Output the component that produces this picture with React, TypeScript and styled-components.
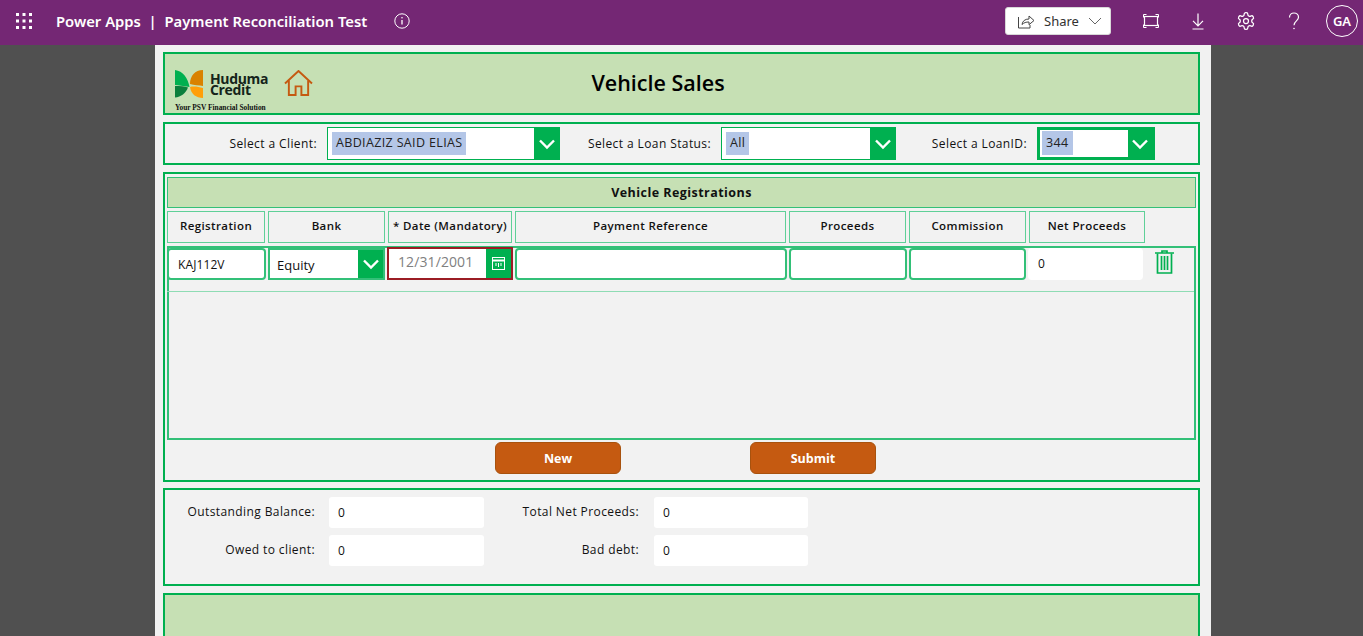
import { createGlobalStyle, styled } from "styled-components";
import { ReactNode } from "react";

const GREEN = "#00b050";
const LEAF = "#c6e0b4";
const SOFT = "#33c078";
const BODY = '"Open Sans", "Noto Sans", "Liberation Sans", sans-serif';

const Global = createGlobalStyle`
  html, body { margin: 0; padding: 0; height: 636px; overflow: hidden; background: #505050; }
  * { box-sizing: border-box; }
  body { font-family: ${BODY}; color: #111; }
`;

const Shell = styled.div`
  width: 1363px;
  height: 636px;
  overflow: hidden;
  display: flex;
  flex-direction: column;
`;

const TopBar = styled.header`
  height: 45px;
  flex: none;
  background: #742774;
  color: #fff;
  display: flex;
  align-items: center;
  padding: 0 0 3px 16px;
`;

const Waffle = styled.svg`
  width: 16px;
  height: 16px;
  margin-right: 24px;
`;

const AppName = styled.div`
  font-family: "Noto Sans", "Open Sans", sans-serif;
  font-size: 14.8px;
  font-weight: 600;
  white-space: pre;
`;

const InfoIcon = styled.svg`
  width: 16px;
  height: 16px;
  margin-left: 27px;
`;

const BarRight = styled.div`
  margin-left: auto;
  display: flex;
  align-items: center;
`;

const ShareButton = styled.button`
  width: 106px;
  height: 28px;
  margin-right: 30px;
  padding: 0 0 0 12px;
  border: 1px solid #d8d8d8;
  border-radius: 3px;
  background: #fff;
  color: #323130;
  font-family: "Noto Sans", "Open Sans", sans-serif;
  font-size: 13px;
  display: flex;
  align-items: center;
  gap: 9px;
`;

const BarIcon = styled.svg<{ $gap: number }>`
  width: 20px;
  height: 20px;
  margin-right: ${(p) => p.$gap}px;
`;

const Avatar = styled.div`
  width: 32px;
  height: 32px;
  margin-right: 5px;
  border: 1px solid #fff;
  border-radius: 50%;
  font-family: "Noto Sans", "Open Sans", sans-serif;
  font-size: 13px;
  font-weight: 600;
  display: flex;
  align-items: center;
  justify-content: center;
`;

const Canvas = styled.main`
  width: 1056px;
  margin-left: 155px;
  flex: 1;
  min-height: 0;
  padding: 7px 11px 0 8px;
  background: #f1f1f1;
  display: flex;
  flex-direction: column;
  gap: 7px;
`;

const Panel = styled.section<{ $h: number; $fill?: boolean }>`
  height: ${(p) => p.$h}px;
  flex: none;
  border: 2px solid ${GREEN};
  background: ${(p) => (p.$fill ? LEAF : "#f2f2f2")};
`;

const HeaderGrid = styled(Panel)`
  display: grid;
  grid-template-columns: 138px 690px;
  padding-left: 10px;
`;

const LogoBlock = styled.div`
  display: grid;
  grid-template-columns: 109px 29px;
  align-items: center;
`;

const LogoLeft = styled.div`
  padding-top: 15px;
`;

const LogoRow = styled.div`
  display: flex;
  align-items: center;
  gap: 6px;
`;

const LogoWords = styled.div`
  font-family: "Open Sans", sans-serif;
  font-size: 14px;
  font-weight: 700;
  line-height: 11.5px;
  letter-spacing: -0.35px;
  color: #14241a;
`;

const Tagline = styled.div`
  margin-top: 6px;
  font-family: "Liberation Serif", serif;
  font-size: 7.4px;
  font-weight: 700;
  line-height: 8px;
  white-space: nowrap;
`;

const Title = styled.h1`
  margin: 0;
  font-size: 21.5px;
  font-weight: 600;
  line-height: 57px;
  text-align: center;
  color: #000;
`;

const FilterRow = styled(Panel)`
  display: flex;
  align-items: center;
`;

const Label = styled.label<{ $w: number }>`
  width: ${(p) => p.$w}px;
  flex: none;
  padding-right: 10px;
  text-align: right;
  font-size: 12px;
  letter-spacing: 0.4px;
  white-space: nowrap;
`;

const Combo = styled.div<{ $w: number; $thick?: boolean }>`
  width: ${(p) => p.$w}px;
  height: 33px;
  flex: none;
  border: ${(p) => (p.$thick ? 3 : 1)}px solid ${GREEN};
  padding-left: ${(p) => (p.$thick ? 2 : 4)}px;
  background: #fff;
  display: flex;
  align-items: stretch;
  justify-content: space-between;
`;

const Selected = styled.span<{ $thick?: boolean }>`
  margin: ${(p) => (p.$thick ? "1px 0 2px" : "4px 0")};
  padding: 0 4px;
  background: #b4c6e7;
  font-size: 12.5px;
  letter-spacing: 0.35px;
  line-height: ${(p) => (p.$thick ? 24 : 22)}px;
  color: #222;
`;

const Chevron = styled.div<{ $w?: number }>`
  width: ${(p) => p.$w ?? 26}px;
  flex: none;
  background: ${GREEN};
  border-left: 1px solid #fff;
  display: flex;
  align-items: center;
  justify-content: center;
`;

const TableBody = styled(Panel)`
  padding: 3px 2px 0;
  display: flex;
  flex-direction: column;
`;

const TableTitle = styled.div`
  height: 31px;
  flex: none;
  border: 1px solid ${SOFT};
  background: ${LEAF};
  font-size: 12.5px;
  font-weight: 700;
  letter-spacing: 0.45px;
  line-height: 29px;
  text-align: center;
`;

const Columns = styled.div`
  margin-top: 3px;
  height: 32px;
  flex: none;
  display: grid;
  grid-template-columns: 98px 117px 124px 271px 117px 117px 116px;
  column-gap: 3px;
`;

const ColumnHead = styled.div`
  padding-bottom: 3px;
  border: 1px solid #5fd098;
  font-size: 11.5px;
  font-weight: 600;
  letter-spacing: 0.4px;
  white-space: nowrap;
  display: flex;
  align-items: center;
  justify-content: center;
`;

const Gallery = styled.div`
  margin-top: 3px;
  height: 194px;
  flex: none;
  border: 2px solid ${SOFT};
`;

const GalleryRow = styled.div`
  height: 44px;
  margin-left: -2px;
  border-bottom: 1px solid #8fdcb4;
  display: grid;
  grid-template-columns: 99px 117px 126px 272px 118px 117px 115px 1fr;
  column-gap: 2px;
`;

const Cell = styled.div<{ $plain?: boolean }>`
  height: 32px;
  padding-left: ${(p) => (p.$plain ? 10 : 9)}px;
  border: ${(p) => (p.$plain ? "0" : `2px solid ${SOFT}`)};
  border-radius: 4px;
  background: #fff;
  font-size: 12px;
  line-height: ${(p) => (p.$plain ? 32 : 29)}px;
  letter-spacing: 0.1px;
`;

const BankCell = styled.div`
  height: 32px;
  padding-left: 7px;
  border: 2px solid ${SOFT};
  background: #fff;
  font-size: 13px;
  line-height: 30px;
  display: flex;
  justify-content: space-between;
`;

const DateCell = styled.div`
  height: 33px;
  margin-top: -1px;
  border: 2px solid #9b1c24;
  background: #fff;
  display: flex;
  justify-content: space-between;
`;

const DateText = styled.span`
  padding-left: 9px;
  font-size: 14px;
  letter-spacing: 0.1px;
  line-height: 26px;
  color: #808080;
`;

const CalendarBox = styled.div`
  width: 25px;
  background: ${GREEN};
  display: flex;
  align-items: center;
  justify-content: center;
`;

const TrashSlot = styled.div`
  padding: 2px 0 0 10px;
`;

const Actions = styled.div`
  margin-top: 2px;
  padding-left: 328px;
  display: flex;
  gap: 129px;
`;

const OrangeButton = styled.button`
  width: 126px;
  height: 32px;
  border: 1px solid #a8520e;
  border-radius: 6px;
  background: #c55a11;
  color: #fff;
  font-family: ${BODY};
  font-size: 12.5px;
  font-weight: 700;
`;

const Summary = styled(Panel)`
  margin-top: -1px;
  padding-top: 7px;
  display: grid;
  grid-template-columns: 150px 169px 155px 169px;
  grid-auto-rows: 31px;
  row-gap: 7px;
  align-items: center;
  align-content: start;
`;

const SumLabel = styled.div`
  padding-bottom: 2px;
  text-align: right;
  font-size: 12px;
  font-weight: 500;
  letter-spacing: 0.4px;
  white-space: nowrap;
`;

const SumValue = styled.div<{ $w: number }>`
  width: ${(p) => p.$w}px;
  height: 31px;
  justify-self: end;
  padding-left: 9px;
  border-radius: 3px;
  background: #fff;
  font-size: 12px;
  line-height: 31px;
`;

const Down = () => (
  <svg width="18" height="18" viewBox="0 0 18 18" fill="none" stroke="#fff" strokeWidth="2.4">
    <path d="M2 5.5 9 12.5l7-7" />
  </svg>
);

const Column = ({ children }: { children: ReactNode }) => <ColumnHead>{children}</ColumnHead>;

export default function App() {
  return (
    <Shell>
      <Global />
      <TopBar>
        <Waffle viewBox="0 0 16 16" fill="#fff">
          {[0, 6.5, 13].flatMap((y) =>
            [0, 6.5, 13].map((x) => <rect key={`${x}-${y}`} x={x} y={y} width="3" height="3" />)
          )}
        </Waffle>
        <AppName>Power Apps  |  Payment Reconciliation Test</AppName>
        <InfoIcon viewBox="0 0 16 16" fill="none" stroke="#fff">
          <circle cx="8" cy="8" r="7.2" />
          <path d="M8 7v4.6" strokeWidth="1.3" />
          <circle cx="8" cy="4.8" r=".8" fill="#fff" stroke="none" />
        </InfoIcon>
        <BarRight>
          <ShareButton>
            <svg width="17" height="15" viewBox="0 0 17 15" fill="none" stroke="#444" strokeWidth="1">
              <path d="M.5 3v11h11.5v-3" />
              <path d="M4 10.5c.5-3.5 3-5.5 7-5.5V2l5 4.5-5 4.2V8c-3 0-5 .6-7 2.5z" />
            </svg>
            Share
            <svg width="14" height="8" viewBox="0 0 14 8" fill="none" stroke="#666">
              <path d="M1 1l6 6 6-6" />
            </svg>
          </ShareButton>
          <BarIcon $gap={27} viewBox="0 0 20 20" fill="none" stroke="#fff">
            <rect x="3.5" y="5.5" width="13" height="9" strokeWidth="1.2" />
            <path d="M2.5 6.5v-3h3M14.5 3.5h3v3M17.5 13.5v3h-3M5.5 16.5h-3v-3" />
          </BarIcon>
          <BarIcon $gap={28} viewBox="0 0 20 20" fill="none" stroke="#fff" strokeWidth="1.2">
            <path d="M10 2.5v12M5 9.8l5 5 5-5M4.5 18h11" />
          </BarIcon>
          <BarIcon $gap={28} viewBox="0 0 24 24" fill="none" stroke="#fff" strokeWidth="1.5">
            <path d="M12.22 2h-.44a2 2 0 0 0-2 2v.18a2 2 0 0 1-1 1.73l-.43.25a2 2 0 0 1-2 0l-.15-.08a2 2 0 0 0-2.73.73l-.22.38a2 2 0 0 0 .73 2.73l.15.1a2 2 0 0 1 1 1.72v.51a2 2 0 0 1-1 1.74l-.15.09a2 2 0 0 0-.73 2.73l.22.38a2 2 0 0 0 2.73.73l.15-.08a2 2 0 0 1 2 0l.43.25a2 2 0 0 1 1 1.73V20a2 2 0 0 0 2 2h.44a2 2 0 0 0 2-2v-.18a2 2 0 0 1 1-1.73l.43-.25a2 2 0 0 1 2 0l.15.08a2 2 0 0 0 2.73-.73l.22-.39a2 2 0 0 0-.73-2.73l-.15-.08a2 2 0 0 1-1-1.74v-.5a2 2 0 0 1 1-1.74l.15-.09a2 2 0 0 0 .73-2.73l-.22-.38a2 2 0 0 0-2.73-.73l-.15.08a2 2 0 0 1-2 0l-.43-.25a2 2 0 0 1-1-1.73V4a2 2 0 0 0-2-2z" />
            <circle cx="12" cy="12" r="3" />
          </BarIcon>
          <BarIcon $gap={22} viewBox="0 0 20 20" fill="none" stroke="#fff" strokeWidth="1.2">
            <path d="M5.5 6.5C5.5 3.8 7.5 2 10 2s4.5 1.8 4.5 4.3c0 3.5-4.5 3.7-4.5 8" />
            <circle cx="10" cy="17.5" r=".8" fill="#fff" stroke="none" />
          </BarIcon>
          <Avatar>GA</Avatar>
        </BarRight>
      </TopBar>

      <Canvas>
        <HeaderGrid $h={63} $fill>
          <LogoBlock>
            <LogoLeft>
              <LogoRow>
                <svg width="29" height="28" viewBox="0 0 29 28">
                  <path d="M0 0C8 1 13 8 14.5 17 8 16 3 15 0 15z" fill="#00b050" />
                  <path d="M0 16c5 0 10 0 13 1.5C11 23 6 27 0 27.5z" fill="#0a7f3c" />
                  <path d="M28 0C20 0 15 6 15 14c4 1 9 1.5 13 2z" fill="#d98200" />
                  <path d="M15 17c4-1 9 0 13 1v10c-7 0-12-4-13-11z" fill="#ff9f0a" />
                </svg>
                <LogoWords>
                  Huduma
                  <br />
                  Credit
                </LogoWords>
              </LogoRow>
              <Tagline>Your PSV Financial Solution</Tagline>
            </LogoLeft>
            <svg width="29" height="27" viewBox="0 0 30 28" fill="none" stroke="#c55a11" strokeWidth="2">
              <path d="M1 14 15 1l14 13" />
              <path d="M5 11v15h7v-9h6v9h7V11" />
            </svg>
          </LogoBlock>
          <Title>Vehicle Sales</Title>
        </HeaderGrid>

        <FilterRow $h={43}>
          <Label $w={162}>Select a Client:</Label>
          <Combo $w={233}>
            <Selected>ABDIAZIZ SAID ELIAS</Selected>
            <Chevron>
              <Down />
            </Chevron>
          </Combo>
          <Label $w={161}>Select a Loan Status:</Label>
          <Combo $w={175}>
            <Selected>All</Selected>
            <Chevron>
              <Down />
            </Chevron>
          </Combo>
          <Label $w={141}>Select a LoanID:</Label>
          <Combo $w={118} $thick>
            <Selected $thick>344</Selected>
            <Chevron $w={25}>
              <Down />
            </Chevron>
          </Combo>
        </FilterRow>

        <TableBody $h={310}>
          <TableTitle>Vehicle Registrations</TableTitle>
          <Columns>
            <Column>Registration</Column>
            <Column>Bank</Column>
            <Column>* Date (Mandatory)</Column>
            <Column>Payment Reference</Column>
            <Column>Proceeds</Column>
            <Column>Commission</Column>
            <Column>Net Proceeds</Column>
          </Columns>
          <Gallery>
            <GalleryRow>
              <Cell>KAJ112V</Cell>
              <BankCell>
                Equity
                <Chevron $w={26}>
                  <Down />
                </Chevron>
              </BankCell>
              <DateCell>
                <DateText>12/31/2001</DateText>
                <CalendarBox>
                  <svg width="15" height="15" viewBox="0 0 15 15" fill="none" stroke="#fff">
                    <rect x="1.5" y="1.5" width="12" height="12" />
                    <path d="M1.5 4.5h12" strokeWidth="2" />
                    <path d="M5 7v3M7.5 7v4M10 7v3" />
                  </svg>
                </CalendarBox>
              </DateCell>
              <Cell />
              <Cell />
              <Cell />
              <Cell $plain>0</Cell>
              <TrashSlot>
                <svg width="19" height="24" viewBox="0 0 19 24" fill="none" stroke={GREEN} strokeWidth="1.7">
                  <path d="M0 3h19M7 2.5V1h5v1.500" />
                  <path d="M2.500 3.500v19.500h14V3.500M6.500 6v14M9.500 6v14M12.500 6v14" />
                </svg>
              </TrashSlot>
            </GalleryRow>
          </Gallery>
          <Actions>
            <OrangeButton>New</OrangeButton>
            <OrangeButton>Submit</OrangeButton>
          </Actions>
        </TableBody>

        <Summary $h={98}>
          <SumLabel>Outstanding Balance:</SumLabel>
          <SumValue $w={155}>0</SumValue>
          <SumLabel>Total Net Proceeds:</SumLabel>
          <SumValue $w={154}>0</SumValue>
          <SumLabel>Owed to client:</SumLabel>
          <SumValue $w={155}>0</SumValue>
          <SumLabel>Bad debt:</SumLabel>
          <SumValue $w={154}>0</SumValue>
        </Summary>

        <Panel $h={60} $fill />
      </Canvas>
    </Shell>
  );
}
